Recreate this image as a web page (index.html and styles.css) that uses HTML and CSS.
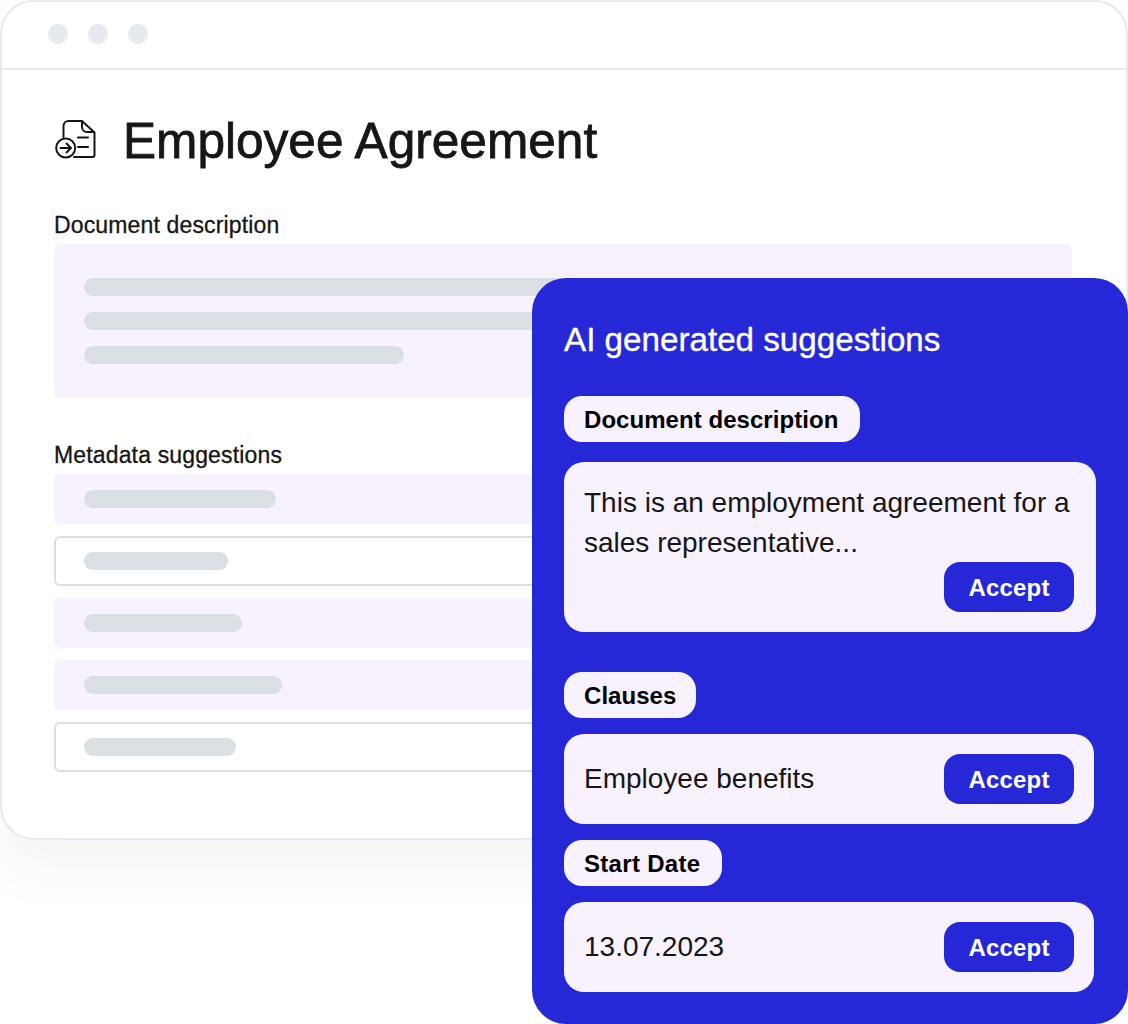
FILE: index.html
```html
<!DOCTYPE html>
<html lang="en">
<head>
  <meta charset="UTF-8">
  <meta name="viewport" content="width=device-width, initial-scale=1.0">
  <title>Employee Agreement</title>
  <link rel="stylesheet" href="styles.css">
</head>
<body>
  <section class="window">
    <div class="window_bar">
      <span class="dot"></span>
      <span class="dot"></span>
      <span class="dot"></span>
    </div>
    <div class="window_body">
      <h1 class="doc_title">
        <svg class="doc_icon" width="44" height="44" viewBox="0 0 44 44" fill="none" stroke="#161616" stroke-width="2" stroke-linecap="round" stroke-linejoin="round">
          <path d="M9.500 18V7a5 5 0 0 1 5-5H28l12.500 11.500V36a2 2 0 0 1-2 2H20"/>
          <path d="M28 2.500V8a5 5 0 0 0 5 5h7"/>
          <circle cx="11.700" cy="29" r="9.500"/>
          <path d="M6.500 29h10M12.500 24.500l4.500 4.500-4.500 4.500"/>
          <path d="M24 18.500h10M24 28h10"/>
        </svg>
        Employee Agreement
      </h1>
      <h3 class="field_label">Document description</h3>
      <div class="desc_box">
        <span class="bone bone_full"></span>
        <span class="bone bone_full"></span>
        <span class="bone bone_short"></span>
      </div>
      <h3 class="field_label meta_label">Metadata suggestions</h3>
      <div class="meta_list">
        <div class="meta_row"><span class="bone b1"></span></div>
        <div class="meta_row outlined"><span class="bone b2"></span></div>
        <div class="meta_row"><span class="bone b3"></span></div>
        <div class="meta_row"><span class="bone b4"></span></div>
        <div class="meta_row outlined"><span class="bone b5"></span></div>
      </div>
    </div>
  </section>

  <aside class="panel">
    <h2 class="panel_title">AI generated suggestions</h2>

    <p class="pill">Document description</p>
    <div class="card card_tall">
      <p class="card_text">This is an employment agreement for a sales representative...</p>
      <button class="accept">Accept</button>
    </div>

    <p class="pill pill_clauses">Clauses</p>
    <div class="card card_row">
      <p class="card_text">Employee benefits</p>
      <button class="accept">Accept</button>
    </div>

    <p class="pill pill_date">Start Date</p>
    <div class="card card_row">
      <p class="card_text">13.07.2023</p>
      <button class="accept">Accept</button>
    </div>
  </aside>
</body>
</html>
```

FILE: styles.css
```css
html, body{  width: 1128px;  height: 1024px;  }
body, h1, h2, h3, p, button{  margin: 0;  padding: 0;  }
body{
  position: relative;  overflow: hidden;  background: #fff;
  font-family: "Liberation Sans", Arial, sans-serif;  color: #161616;
}
button{  border: 0;  font-family: inherit;  }

.window{
  box-sizing: border-box;  width: 1128px;  height: 840px;
  background: #fff;  border: 2px solid #e6e9f0;  border-radius: 34px;
  box-shadow: 0 24px 60px rgba(40, 50, 70, .06);
}
.window_bar{
  box-sizing: border-box;  height: 68px;  padding: 22px 0 0 46px;
  display: flex;  gap: 20px;  border-bottom: 2px solid #e6e9f0;
}
.dot{  width: 20px;  height: 20px;  border-radius: 50%;  background: #e6e9f0;  }
.window_body{  padding: 0 54px 0 52px;  }

.doc_title{
  display: flex;  align-items: center;  gap: 25px;  height: 110px;  margin-top: 16px;  line-height: 112px;
  font-size: 49.6px;  font-weight: 400;  -webkit-text-stroke: .8px #161616;  color: #161616;
}
.doc_icon{  flex: none;  }

.field_label{
  font-size: 23px;  line-height: 26px;  font-weight: 400;  letter-spacing: .15px;  -webkit-text-stroke: .3px #161616;
  margin-top: 16px;
}
.meta_label{  margin-top: 44px;  }

.desc_box{
  margin-top: 6px;  height: 154px;  box-sizing: border-box;  padding: 34px 30px;
  background: #f7f2fd;  border-radius: 6px;
  display: flex;  flex-direction: column;  gap: 16px;
}
.bone{  display: block;  height: 18px;  border-radius: 9px;  background: #d9dfe3;  }
.bone_short{  width: 320px;  }
.b1{  width: 192px;  }
.b2{  width: 144px;  }
.b3{  width: 158px;  }
.b4{  width: 198px;  }
.b5{  width: 152px;  }

.meta_list{  margin-top: 6px;  display: flex;  flex-direction: column;  gap: 12px;  }
.meta_row{
  box-sizing: border-box;  height: 50px;  padding-left: 30px;
  display: flex;  align-items: center;
  background: #f7f2fd;  border-radius: 6px;
}
.meta_row.outlined{  background: #fff;  border: 2px solid #d9dfe3;  padding-left: 28px;  }

/* sits on top of the document window */
.panel{
  position: absolute;  left: 532px;  top: 278px;  box-sizing: border-box;
  width: 596px;  height: 746px;  padding: 43px 32px 0;
  background: #2628d7;  border-radius: 34px;
}
.panel_title{  font-size: 33.2px;  line-height: 38px;  font-weight: 400;  color: #fff;  -webkit-text-stroke: .35px #fff;  }

.pill{
  display: block;  width: 296px;  height: 46px;  box-sizing: border-box;  margin-top: 37px;
  padding-left: 20px;  line-height: 48px;  font-size: 24px;  font-weight: 700;  letter-spacing: .05px;
  background: #f7f2fd;  border-radius: 18px;  color: #000;
}
.pill_clauses{  width: 132px;  margin-top: 40px;  }
.pill_date{  width: 158px;  margin-top: 16px;  letter-spacing: .3px;  }

.card{
  box-sizing: border-box;  background: #f7f2fd;  border-radius: 20px;  margin-top: 20px;
  width: 530px;  padding: 0 20px;
}
.card_tall{  width: 532px;  height: 170px;  padding: 21px 22px 0 20px;  display: flex;  flex-direction: column;  }
.card_tall .accept{  align-self: flex-end;  margin-top: -1px;  }
.card_row{  height: 90px;  display: flex;  align-items: center;  justify-content: space-between;  margin-top: 16px;  }
.card_text{  font-size: 28px;  line-height: 40px;  color: #161616;  }

.accept{
  width: 130px;  height: 50px;  padding-top: 2px;  border-radius: 16px;  background: #2628d7;  color: #fff;
  font-size: 24px;  font-weight: 700;  letter-spacing: .2px;
}
```
